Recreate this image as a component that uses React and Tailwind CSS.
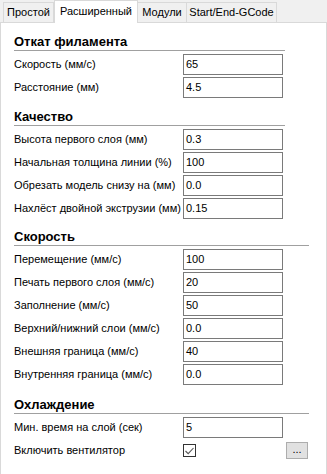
import React from 'react';

const TABS = [
  { label: 'Простой', w: 'w-[51px]' },
  { label: 'Расширенный', w: 'w-[84px]', active: true },
  { label: 'Модули', w: 'w-[50px]' },
  { label: 'Start/End-GCode', w: 'w-[91px]' },
];

const SECTIONS = [
  {
    title: 'Откат филамента',
    wide: false,
    mt: 'mt-0',
    rows: [
      ['Скорость (мм/с)', '65'],
      ['Расстояние (мм)', '4.5'],
    ],
  },
  {
    title: 'Качество',
    wide: false,
    mt: 'mt-[11px]',
    rows: [
      ['Высота первого слоя (мм)', '0.3'],
      ['Начальная толщина линии (%)', '100'],
      ['Обрезать модель снизу на (мм)', '0.0'],
      ['Нахлёст двойной экструзии (мм)', '0.15'],
    ],
  },
  {
    title: 'Скорость',
    wide: true,
    mt: 'mt-[10px]',
    rows: [
      ['Перемещение (мм/с)', '100'],
      ['Печать первого слоя (мм/с)', '20'],
      ['Заполнение (мм/с)', '50'],
      ['Верхний/нижний слои (мм/с)', '0.0'],
      ['Внешняя граница (мм/с)', '40'],
      ['Внутренняя граница (мм/с)', '0.0'],
    ],
  },
];

function Field({ value }) {
  return (
    <div className="w-[100px] h-[21px] border border-[#7a7a7a] bg-white pl-[2px] flex items-center text-[11px] text-black">
      {value}
    </div>
  );
}

function Header({ title, wide }) {
  return (
    <div className={`${wide ? 'w-[295px]' : 'w-[271px]'} h-[17px] border-b border-[#a0a0a0] text-[13px] font-bold leading-[16px] text-black`}>
      {title}
    </div>
  );
}

function Row({ label, children }) {
  return (
    <div className="flex items-center h-[21px]">
      <div className="w-[169px] text-[11px] text-black whitespace-nowrap">{label}</div>
      {children}
    </div>
  );
}

export default function App() {
  return (
    <div className="w-[327px] h-[474px] bg-white overflow-hidden" style={{ fontFamily: '"Liberation Sans", Arial, sans-serif' }}>
      <div className="h-[23px] bg-[#f0f0f0] border-b border-[#d9d9d9] flex items-end pl-[3px]">
        {TABS.map((t) =>
          t.active ? (
            <div key={t.label} className={`${t.w} h-[23px] -mb-px bg-white border border-b-0 border-[#d9d9d9] flex items-center justify-center text-[11px] text-black pb-[2px]`}>
              {t.label}
            </div>
          ) : (
            <div key={t.label} className={`${t.w} h-[20px] bg-[#f0f0f0] border border-b-0 border-[#d9d9d9] -ml-px first:ml-0 flex items-center justify-center text-[11px] text-black`}>
              {t.label}
            </div>
          )
        )}
      </div>
      <div className="h-[451px] border-x border-[#d9d9d9] pl-[13px] pt-[11px]">
        {SECTIONS.map((s) => (
          <div key={s.title} className={s.mt}>
            <Header title={s.title} wide={s.wide} />
            <div className="mt-[3px] flex flex-col gap-[2px]">
              {s.rows.map(([label, value]) => (
                <Row key={label} label={label}>
                  <Field value={value} />
                </Row>
              ))}
            </div>
          </div>
        ))}
        <div className="mt-[12px]">
          <Header title="Охлаждение" wide />
          <div className="mt-[3px] flex flex-col gap-[2px]">
            <Row label="Мин. время на слой (сек)">
              <Field value="5" />
            </Row>
            <Row label="Включить вентилятор">
              <div className="w-[100px] flex items-center">
                <div className="w-[13px] h-[13px] border border-[#333333] bg-white flex items-center justify-center">
                  <svg width="9" height="8" viewBox="0 0 9 8">
                    <path d="M0.5 4 L3.2 6.7 L8.5 1" fill="none" stroke="#555555" strokeWidth="1.1" />
                  </svg>
                </div>
              </div>
              <div className="ml-[3px] w-[22px] h-[17px] bg-[#e1e1e1] border border-[#adadad] flex items-center justify-center text-[11px] leading-none text-black pb-[3px]">
                ...
              </div>
            </Row>
          </div>
        </div>
      </div>
    </div>
  );
}
